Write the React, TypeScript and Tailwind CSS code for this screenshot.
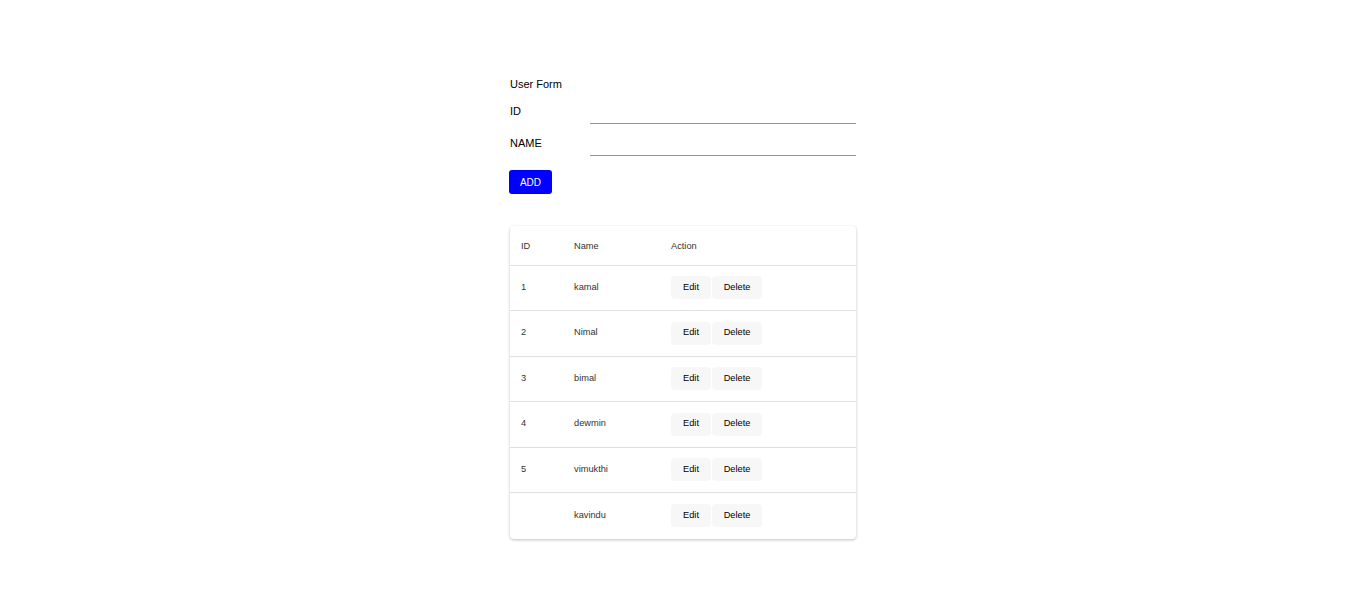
import React from 'react';

interface User {
  id: string;
  name: string;
}

const users: User[] = [
  { id: '1', name: 'kamal' },
  { id: '2', name: 'Nimal' },
  { id: '3', name: 'bimal' },
  { id: '4', name: 'dewmin' },
  { id: '5', name: 'vimukthi' },
  { id: '', name: 'kavindu' },
];

const Field: React.FC<{ label: string }> = ({ label }) => (
  <div className="flex items-end h-[32px]">
    <label className="w-[80px] text-[11px] text-black pb-[5px]">{label}</label>
    <input className="w-[266px] h-[22px] border-b border-[#949494] outline-none text-[11px]" />
  </div>
);

const App: React.FC = () => {
  return (
    <div className="min-h-[596px] bg-white flex justify-center pl-[18px] font-['Liberation_Sans',Arial,sans-serif]">
      <div className="w-[346px] pt-[78px]">
        <h2 className="text-[11px] text-black leading-[13px]">User Form</h2>

        <div className="mt-[1px]">
          <Field label="ID" />
          <Field label="NAME" />
        </div>

        <button className="mt-[14px] -ml-[1px] w-[43px] h-[24px] bg-[#0000ff] text-white text-[10px] rounded-[3px]">
          ADD
        </button>

        <div className="mt-[32px] rounded-[4px] bg-white shadow-[0_1px_3px_rgba(0,0,0,0.25)] text-[9.25px] text-[#333]">
          <div className="grid grid-cols-[53px_97px_1fr] items-center pl-[11px] pt-[2px] h-[40px] border-b border-[#e0e0e0]">
            <span>ID</span>
            <span>Name</span>
            <span>Action</span>
          </div>
          {users.map((u, i) => (
            <div
              key={i}
              className={`grid grid-cols-[53px_97px_1fr] items-center pl-[11px] ${
                i % 2 === 0 ? 'h-[45px]' : 'h-[46px]'
              } ${i < users.length - 1 ? 'border-b border-[#e0e0e0]' : ''}`}
            >
              <span className="-mt-[1px]">{u.id}</span>
              <span className="-mt-[1px]">{u.name}</span>
              <div className="flex items-center gap-[1px] text-black -mt-[1px]">
                <button className="w-[40px] h-[23px] rounded-[4px] bg-[#f7f7f7] text-[9.25px]">Edit</button>
                <button className="w-[50px] h-[23px] rounded-[4px] bg-[#f7f7f7] text-[9.25px]">Delete</button>
              </div>
            </div>
          ))}
        </div>
      </div>
    </div>
  );
};

export default App;
